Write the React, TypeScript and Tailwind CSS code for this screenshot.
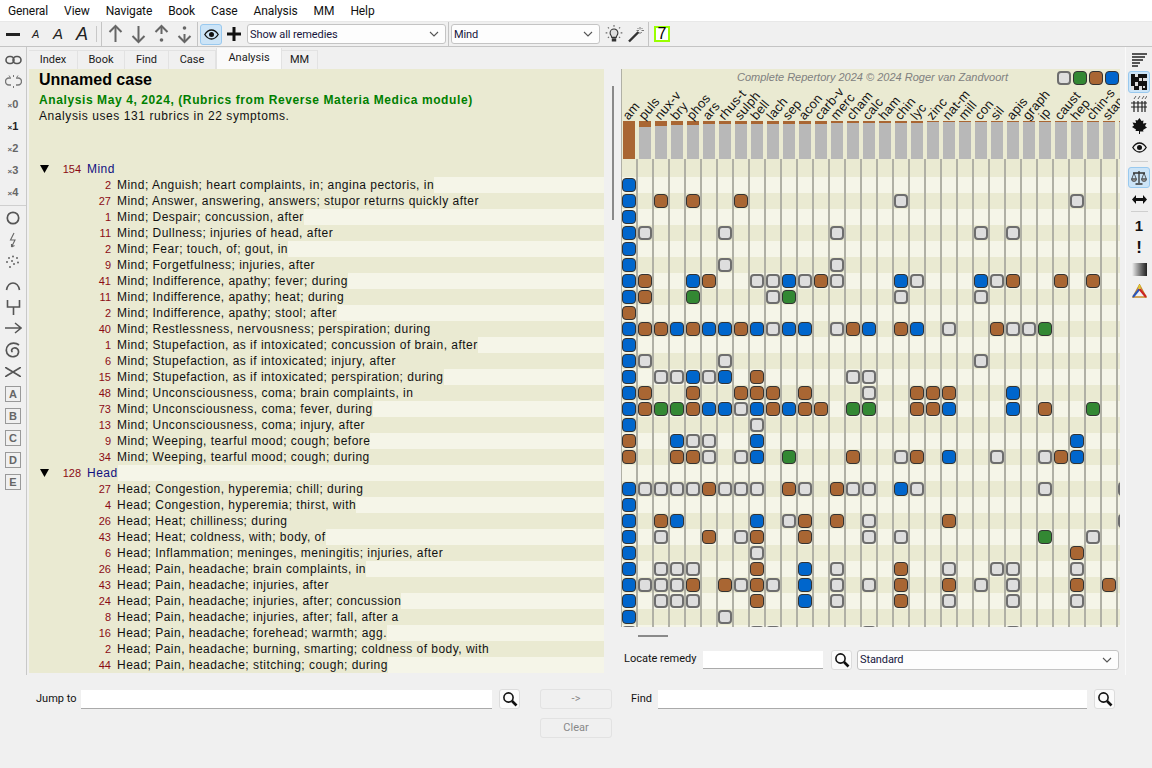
import React from "react";

const ui = "font-['Roboto',sans-serif]";
const list = "font-['Liberation_Sans',Arial,sans-serif]";

const cols = ["am","puls","nux-v","bry","phos","ars","rhus-t","sulph","bell","lach","sep","acon","carb-v","merc","cham","calc","ham","chin","lyc","zinc","nat-m","mill","con","sil","apis","graph","ip","caust","hep","chin-s","stann","x"];
const tops = [38,6,5,4,4,3,3,3,3,3,3,3,3,2,2,2,2,2,2,1,1,1,1,1,1,1,1,1,1,1,1,1];

type Cells = Record<number, string>;
const parse = (s: string): Cells => {
  const o: Cells = {};
  s.split(" ").filter(Boolean).forEach((t) => {
    o[parseInt(t)] = t.slice(-1);
  });
  return o;
};

type Row = { n: number; t: string; head?: boolean; c: string };
const rows: Row[] = [
  { n: 154, t: "Mind", head: true, c: "" },
  { n: 2, t: "Mind; Anguish; heart complaints, in; angina pectoris, in", c: "0b" },
  { n: 27, t: "Mind; Answer, answering, answers; stupor returns quickly after", c: "0b 2r 4r 7r 17w 28w" },
  { n: 1, t: "Mind; Despair; concussion, after", c: "0b" },
  { n: 11, t: "Mind; Dullness; injuries of head, after", c: "0b 1w 6w 13w 22w 24w" },
  { n: 2, t: "Mind; Fear; touch, of; gout, in", c: "0b" },
  { n: 9, t: "Mind; Forgetfulness; injuries, after", c: "0b 6w 13w" },
  { n: 41, t: "Mind; Indifference, apathy; fever; during", c: "0b 1r 4b 5r 8w 9w 10b 11w 12r 13w 17b 18w 22b 23w 24r 27r 29r" },
  { n: 11, t: "Mind; Indifference, apathy; heat; during", c: "0b 1r 4g 9w 10g 17w 22w" },
  { n: 2, t: "Mind; Indifference, apathy; stool; after", c: "0r" },
  { n: 40, t: "Mind; Restlessness, nervousness; perspiration; during", c: "0b 1r 2r 3b 4r 5b 6b 7r 8b 9w 10b 11b 13w 14r 15b 17r 18b 20w 23r 24w 25w 26g" },
  { n: 1, t: "Mind; Stupefaction, as if intoxicated; concussion of brain, after", c: "0b" },
  { n: 6, t: "Mind; Stupefaction, as if intoxicated; injury, after", c: "0b 1w 6w 22w" },
  { n: 15, t: "Mind; Stupefaction, as if intoxicated; perspiration; during", c: "0b 2w 3w 4b 5w 6b 8r 14w 15w" },
  { n: 48, t: "Mind; Unconsciousness, coma; brain complaints, in", c: "0b 1r 4r 7r 8r 9r 11r 15w 18r 19r 20r 24b" },
  { n: 73, t: "Mind; Unconsciousness, coma; fever, during", c: "0b 1r 2g 3g 4r 5b 6b 7w 8b 9r 10b 11r 12r 14g 15g 18r 19r 20b 24b 26r 29g" },
  { n: 13, t: "Mind; Unconsciousness, coma; injury, after", c: "0b 8w" },
  { n: 9, t: "Mind; Weeping, tearful mood; cough; before", c: "0r 3b 4w 5w 8b 28b" },
  { n: 34, t: "Mind; Weeping, tearful mood; cough; during", c: "0r 3r 4r 5w 7w 8b 10g 14r 17w 18r 20b 23w 26w 27r 28b" },
  { n: 128, t: "Head", head: true, c: "" },
  { n: 27, t: "Head; Congestion, hyperemia; chill; during", c: "0b 1w 2w 3w 4w 5r 6w 7w 8w 10r 11w 13r 14w 15w 17b 18w 26w 31w" },
  { n: 4, t: "Head; Congestion, hyperemia; thirst, with", c: "0b" },
  { n: 26, t: "Head; Heat; chilliness; during", c: "0b 2r 3b 8b 10w 11r 13r 15w 20r 31w" },
  { n: 43, t: "Head; Heat; coldness, with; body, of", c: "0b 2w 5r 7w 8r 11r 15w 17w 26g 29w" },
  { n: 6, t: "Head; Inflammation; meninges, meningitis; injuries, after", c: "0b 8w 28r" },
  { n: 26, t: "Head; Pain, headache; brain complaints, in", c: "0b 2w 3w 4w 8r 11b 13w 17r 20w 23w 24w 28w" },
  { n: 43, t: "Head; Pain, headache; injuries, after", c: "0b 1w 2w 3w 4r 6r 7w 8r 9w 11b 13w 15w 17r 20r 22w 24w 28r 30r" },
  { n: 24, t: "Head; Pain, headache; injuries, after; concussion", c: "0b 2w 3w 4w 8r 11b 13w 17r 20w 24w 28w" },
  { n: 8, t: "Head; Pain, headache; injuries, after; fall, after a", c: "0b 6w" },
  { n: 16, t: "Head; Pain, headache; forehead; warmth; agg.", c: "0w 8w 9w 15w 24w" },
  { n: 2, t: "Head; Pain, headache; burning, smarting; coldness of body, with", c: "" },
  { n: 44, t: "Head; Pain, headache; stitching; cough; during", c: "" },
];

function Chip({ k }: { k: string }) {
  if (k === "w")
    return <div className="w-[14px] h-[14px] rounded-[4px] bg-[#dedede] border-2 border-[#6e6e6e]" />;
  const bg = k === "b" ? "bg-[#0066cc]" : k === "r" ? "bg-[#a96633]" : "bg-[#338833]";
  return <div className={`w-[14px] h-[14px] rounded-[4px] border-[1.5px] border-[#333] ${bg}`} />;
}

function Select({ label, w }: { label: string; w: string }) {
  return (
    <div className={`${w} h-[20px] shrink-0 flex items-center justify-between bg-[#fdfdfd] border border-[#c4c4c4] rounded-[3px] pl-[2px] pr-[6px] text-[11px] tracking-[-0.1px] text-[#16163c] ${ui}`}>
      <span className="pt-[2px]">{label}</span>
      <svg width="10" height="6" viewBox="0 0 10 6" fill="none" stroke="#555" strokeWidth="1.1"><path d="M1 1l4 4 4-4" /></svg>
    </div>
  );
}

function Search() {
  return (
    <div className="w-[21px] h-[20px] shrink-0 flex items-center justify-center bg-[#fbfbfb] border border-[#dcdcdc] rounded-[3px]">
      <svg width="16" height="16" viewBox="0 0 16 16" fill="none" stroke="#111"><circle cx="6.5" cy="6.5" r="4.6" strokeWidth="1.6" /><path d="M10 10l4.5 4.5" strokeWidth="2.6" /></svg>
    </div>
  );
}

function Arrow({ down, dot }: { down?: boolean; dot?: boolean }) {
  return (
    <svg width="23" height="20" viewBox="0 0 23 20" fill="none" stroke="#666" strokeWidth="2" className={down ? "rotate-180" : ""}>
      <path d={dot ? "M11.5 10V2" : "M11.5 18V2"} />
      <path d="M5.5 8l6-6 6 6" />
      {dot && <circle cx="11.5" cy="16" r="1.8" fill="#666" stroke="none" />}
    </svg>
  );
}

function Toolbar() {
  return (
    <div className="h-[26px] shrink-0 flex items-center border-t border-[#e8e8e8] border-b border-b-[#c4c4c4] bg-[#f0f0f0] pl-[6px]">
      <div className="w-[14px] h-[3px] bg-[#222] shrink-0" />
      <span className={`ml-[12px] w-[12px] text-[11px] italic text-[#222] ${list}`}>A</span>
      <span className={`ml-[9px] w-[17px] text-[15px] italic text-[#222] ${list}`}>A</span>
      <span className={`ml-[6px] w-[20px] text-[18px] italic text-[#222] ${list}`}>A</span>
      <div className="w-px h-[16px] bg-[#c8c8c8] shrink-0" />
      <div className="ml-[4px] w-px h-[24px] bg-[#c4c4c4] shrink-0" />
      <div className="ml-[2px] flex">
        <Arrow /><Arrow down /><Arrow dot /><Arrow down dot />
      </div>
      <div className="ml-[1px] w-px h-[24px] bg-[#c4c4c4] shrink-0" />
      <div className="ml-[2px] w-[22px] h-[21px] flex items-center justify-center bg-[#cce4f7] border border-[#99c9ef] rounded-[3px]">
        <EyeIcon />
      </div>
      <svg width="14" height="14" viewBox="0 0 14 14" className="ml-[5px]"><path d="M7 0v14M0 7h14" stroke="#111" strokeWidth="3" /></svg>
      <div className="ml-[6px]"><Select label="Show all remedies" w="w-[199px]" /></div>
      <div className="ml-[2px] w-px h-[24px] bg-[#c4c4c4] shrink-0" />
      <div className="ml-[2px]"><Select label="Mind" w="w-[149px]" /></div>
      <svg width="20" height="20" viewBox="0 0 18 18" fill="none" stroke="#333" className="ml-[4px]">
        <path d="M5.5 8a3.5 3.5 0 117 0c0 2-1.5 2.5-1.5 4H7c0-1.500-1.500-2-1.500-4z" fill="#ddd" />
        <path d="M7 13.500h4M7 15h4" strokeWidth="1.500" />
        <path d="M9 1v1.500M3.500 3l1 1M14.500 3l-1 1M1.500 8H3M15 8h1.500M3.500 12.500l1-1M14.500 12.500l-1-1" stroke="#666" />
      </svg>
      <svg width="18" height="18" viewBox="0 0 18 18" fill="none" className="ml-[3px]">
        <path d="M2 16.500L11.500 7" stroke="#333" strokeWidth="2.400" />
        <path d="M13 2v2.500M13 7v2M9.500 5.500H12M14.500 5.500H17M10.500 3l1 1M15.500 3l-1 1M15 8l-.8-.8" stroke="#777" />
      </svg>
      <div className="ml-[3px] w-px h-[24px] bg-[#c4c4c4] shrink-0" />
      <div className={`ml-[5px] w-[16px] h-[16px] border-[2px] border-[#99ff00] flex items-center justify-center text-[16px] leading-none text-black bg-white ${list}`}>7</div>
    </div>
  );
}

function EyeIcon() {
  return (
    <svg width="15" height="11" viewBox="0 0 15 11" fill="none" stroke="#111">
      <path d="M.8 5.500C3 2 5 1 7.500 1s4.500 1 6.700 4.500C12 9 10 10 7.500 10S3 9 .8 5.500z" strokeWidth="1.300" />
      <circle cx="7.500" cy="5.500" r="2.500" fill="#111" stroke="none" />
    </svg>
  );
}

const S = "#555";
const leftIcons: { h: number; el: React.ReactNode }[] = [
  { h: 22, el: <svg width="17" height="10" viewBox="0 0 17 10" fill="none" stroke={S} strokeWidth="1.600"><rect x="1" y="1.500" width="8" height="7" rx="3.500" /><rect x="8" y="1.500" width="8" height="7" rx="3.500" /></svg> },
  { h: 22, el: <svg width="17" height="14" viewBox="0 0 17 14" fill="none" stroke="#777" strokeWidth="1.400"><path d="M6 3H4a3.500 3.500 0 000 7h2M11 3h2a3.500 3.500 0 010 7h-2" /><path d="M8.500 0v2M8.500 11v2M4 .5l1 1.500M13 .5l-1 1.500" strokeWidth="1" /></svg> },
  ...["0", "1", "2", "3", "4"].map((d) => ({
    h: 22,
    el: <span className={`text-[11px] font-bold ${d === "1" ? "text-[#222]" : "text-[#666]"} ${list}`}><span className="text-[8px]">×</span>{d}</span>,
  })),
  { h: 4, el: <div className="w-full h-px bg-[#cfcfcf]" /> },
  { h: 22, el: <svg width="14" height="14" viewBox="0 0 14 14" fill="none" stroke={S} strokeWidth="1.700"><circle cx="7" cy="7" r="5.700" /></svg> },
  { h: 22, el: <svg width="10" height="17" viewBox="0 0 10 17" fill="none" stroke="#666" strokeWidth="1.100"><path d="M6 1L2.500 8H7L3.500 15M3.500 15l0-3M3.500 15l3-1.500" /></svg> },
  { h: 22, el: <svg width="14" height="14" viewBox="0 0 14 14" fill="#666"><circle cx="7" cy="1.500" r="1" /><circle cx="3" cy="3" r="1" /><circle cx="11" cy="3" r="1" /><circle cx="1" cy="7" r="1" /><circle cx="6" cy="6" r="1" /><circle cx="12" cy="7.500" r="1" /><circle cx="8" cy="9" r="1" /><circle cx="4" cy="12" r="1" /></svg> },
  { h: 26, el: <svg width="16" height="9" viewBox="0 0 16 9" fill="none" stroke={S} strokeWidth="1.600"><path d="M1.500 8C2.500 3 5 1 8 1s5.500 2 6.500 7" /></svg> },
  { h: 18, el: <svg width="15" height="16" viewBox="0 0 15 16" fill="none" stroke={S} strokeWidth="1.600" className="-mt-[3px]"><path d="M1.500 1v7h12V1M7.500 8v8" /></svg> },
  { h: 22, el: <svg width="17" height="12" viewBox="0 0 17 12" fill="none" stroke={S} strokeWidth="1.500"><path d="M0 6h16M10 1l6 5-6 5" /></svg> },
  { h: 22, el: <svg width="16" height="16" viewBox="0 0 16 16" fill="none" stroke={S} strokeWidth="1.700"><path d="M14 3C11 .5 6 .5 3.500 3 .5 6 .5 11 4 13.500c3.500 2.500 9 1 9.500-3 .4-3-2-5-4.500-4.500C6.500 6.500 6 9 7.500 10" /></svg> },
  { h: 22, el: <svg width="16" height="10" viewBox="0 0 16 10" fill="none" stroke={S} strokeWidth="1.600"><path d="M0 0c4 3 12 7 16 10M0 10C4 7 12 3 16 0" /></svg> },
  ...["A", "B", "C", "D", "E"].map((l) => ({
    h: 22,
    el: <div className={`w-[16px] h-[16px] border border-[#999] flex items-center justify-center text-[11px] font-bold text-[#666] leading-none ${list}`}>{l}</div>,
  })),
];

function LeftBar() {
  return (
    <div className="w-[27px] shrink-0 flex flex-col items-center border-r border-[#c8c8c8] pt-[2px]">
      {leftIcons.map((it, i) => (
        <div key={i} style={{ height: it.h }} className="w-full flex items-center justify-center">{it.el}</div>
      ))}
    </div>
  );
}

function RightBar() {
  return (
    <div className="w-[27px] shrink-0 flex flex-col items-center border-l border-[#fafafa] pt-[2px]">
      <div className="h-[22px] flex items-center">
        <svg width="15" height="15" viewBox="0 0 15 15" stroke="#222" strokeWidth="1.300"><path d="M0 1h15M0 4h13M0 7h11M0 10h8M0 13h6" /></svg>
      </div>
      <div className="w-[22px] h-[22px] flex items-center justify-center bg-[#cce4f7] border border-[#99c9ef] rounded-[3px]">
        <svg width="16" height="16" viewBox="0 0 16 16"><rect width="16" height="16" fill="#111" /><path d="M4 0h3v3H4zM12 4h4v3h-4zM4 8h3v4H4zM8 4h3v3H8zM0 12h3v4H0zM8 12h3v4H8zM12 12h2v2h-2z" fill="#ddd" /></svg>
      </div>
      <div className="h-[22px] flex items-center">
        <svg width="16" height="16" viewBox="0 0 16 16" stroke="#222" fill="none"><path d="M0 7h16M0 11h16M3 5v11M7 5v11M11 5v11M14 5v11" strokeWidth="1.200" /><path d="M3 3l2-3M7 3l2-3M11 3l2-3M14 3l2-3" strokeWidth=".7" /></svg>
      </div>
      <div className="h-[22px] flex items-center">
        <svg width="15" height="16" viewBox="0 0 15 16"><path d="M7.500 0l2 3 2-.5-.5 3 3.500-.5-1.500 3 2 1.500-4 2.500.5 1.500H8v2.500H7V13H3.500l.5-1.500L0 9l2-1.500L.5 4.500 4 5l-.5-3 2 .5z" fill="#111" /></svg>
      </div>
      <div className="h-[21px] flex items-center"><EyeIcon /></div>
      <div className="w-[17px] h-px bg-[#cfcfcf] my-[3px]" />
      <div className="mt-[2px] w-[22px] h-[21px] flex items-center justify-center bg-[#cce4f7] border border-[#99c9ef] rounded-[3px]">
        <svg width="16" height="15" viewBox="0 0 16 15" fill="none" stroke="#333"><path d="M8 1v12M4.500 14h7M2 3h12" strokeWidth="1.300" /><path d="M3 3L.7 9h4.600zM13 3l-2.300 6h4.600z" strokeWidth=".8" /><path d="M.5 9a2.500 2.500 0 005 0zM10.500 9a2.500 2.500 0 005 0z" fill="#999" strokeWidth=".7" /></svg>
      </div>
      <div className="h-[22px] flex items-center">
        <svg width="15" height="9" viewBox="0 0 15 9" fill="#111"><path d="M0 4.500L4 0v3h7V0l4 4.500L11 9V6H4v3z" /></svg>
      </div>
      <div className="w-[17px] h-px bg-[#cfcfcf] my-[1px]" />
      <div className={`h-[22px] mt-[1px] flex items-center text-[15px] font-bold text-[#111] leading-none ${list}`}>1</div>
      <div className={`h-[22px] flex items-center text-[17px] font-bold text-[#111] leading-none ${list}`}>!</div>
      <div className="h-[22px] flex items-center">
        <div className="w-[15px] h-[13px] bg-gradient-to-r from-[#f0f0f0] to-[#222]" />
      </div>
      <div className="h-[22px] flex items-center">
        <svg width="15" height="14" viewBox="0 0 15 14" fill="none"><path d="M7.500 1L1 13h13z" stroke="#c98a2a" strokeWidth="1.500" /><path d="M1 13L7.500 5" stroke="#2a55bb" strokeWidth="2" /><path d="M14 13L7.500 5" stroke="#c22" strokeWidth="2" /><path d="M7.500 1v4" stroke="#ddcc33" strokeWidth="2" /></svg>
      </div>
    </div>
  );
}

function Tabs() {
  const t: [string, string][] = [["Index", "w-[49px]"], ["Book", "w-[47px]"], ["Find", "w-[44px]"], ["Case", "w-[47px]"], ["Analysis", "w-[66px]"], ["MM", "w-[36px]"]];
  return (
    <div className={`h-[22px] shrink-0 flex items-end pl-[2px] text-[11px] text-[#1a1a1a] ${ui}`}>
      {t.map(([l, w]) =>
        l === "Analysis" ? (
          <div key={l} className={`${w} h-[21px] bg-[#fafafa] border-x border-[#e2e2e2] text-center leading-[20px]`}>{l}</div>
        ) : (
          <div key={l} className={`${w} h-[19px] bg-[#f0f0f0] border-r border-t border-[#e2e2e2] text-center leading-[18px]`}>{l}</div>
        )
      )}
    </div>
  );
}

function LeftPanel() {
  return (
    <div className={`w-[575px] shrink-0 bg-[#eaead2] overflow-hidden text-[12px] tracking-[0.48px] ${list}`}>
      <div className="h-[92px] pl-[10px]">
        <div className="h-[23px] text-[16px] leading-[21px] font-bold tracking-normal text-black">Unnamed case</div>
        <div className="h-[16px] leading-[17px] font-bold tracking-[0.6px] text-[#008000]">Analysis May 4, 2024, (Rubrics from Reverse Materia Medica module)</div>
        <div className="h-[16px] leading-[16px] tracking-[0.58px] text-[#111]">Analysis uses 131 rubrics in 22 symptoms.</div>
      </div>
      {rows.map((r, i) =>
        <div key={i} className="h-[16px] flex leading-[16px]">
          {r.head ? (
            <div className="flex shrink-0">
              <div className="w-[10px] ml-[11px] flex items-center">
                <svg width="9" height="8" viewBox="0 0 9 8"><path d="M0 0h9L4.500 8z" fill="#000" /></svg>
              </div>
              <span className="w-[31px] text-right text-[11px] tracking-normal text-[#8b0a14]">{r.n}</span>
              <span className="ml-[6px] text-[#101080]">{r.t}</span>
            </div>
          ) : (
            <div className="flex shrink-0">
              <span className="w-[82px] text-right text-[11px] tracking-normal text-[#8b0a14]">{r.n}</span>
              <span className="ml-[6px] text-[#111]">{r.t}</span>
            </div>
          )}
          <div className={`flex-1 ${i % 2 === 1 ? "bg-[#f5f5e8]" : ""}`} />
        </div>
      )}
    </div>
  );
}

function RightPanel() {
  const gridRows = rows.slice(1, 30);
  return (
    <div className="w-[499px] shrink-0 flex flex-col">
      <div className="h-[558px] shrink-0 overflow-hidden bg-[#eaead2] border-l border-[#b0b0a5]">
        <div className="h-[90px] flex flex-col overflow-hidden bg-[#eaead2]">
          <div className="h-[15px] mt-[1px] flex items-center">
            <span className={`ml-[115px] text-[11px] italic text-[#808080] ${list}`}>Complete Repertory 2024 © 2024 Roger van Zandvoort</span>
            <div className="ml-auto mr-[1px] flex gap-[2px] items-center">
              {["w", "g", "r", "b"].map((k) => (
                <div key={k} className="w-[14px] flex justify-center"><Chip k={k} /></div>
              ))}
            </div>
          </div>
          <div className="flex-1" />
          <div className="h-[38px] flex shrink-0">
            {cols.map((c, i) => (
              <div key={i} className="relative w-[16px] shrink-0 pl-px">
                {c !== "x" && (
                  <span className={`absolute left-[8px] bottom-[37px] origin-bottom-left -rotate-[50deg] whitespace-nowrap text-[13px] leading-[13px] tracking-[0.2px] text-[#111] ${list}`}>{c}</span>
                )}
                <div className="w-[12px] h-[38px] bg-[#b8b8b8]">
                  <div className="bg-[#a96633]" style={{ height: tops[i] }} />
                </div>
              </div>
            ))}
          </div>
        </div>
        <div className="h-[18px] flex">
          {cols.map((_, i) => <div key={i} className="w-[16px] shrink-0 border-r-2 border-[#b0b0a5]" />)}
        </div>
        {gridRows.map((r, i) => {
          const cells = parse(r.c);
          return (
            <div key={i} className={`h-[16px] flex ${i % 2 === 0 ? "bg-[#f5f5e8]" : "bg-[#eaead2]"}`}>
              {cols.map((_, k) => (
                <div key={k} className="w-[16px] h-[16px] shrink-0 border-r-2 border-[#b0b0a5] flex items-center justify-center">
                  {cells[k] && <Chip k={cells[k]} />}
                </div>
              ))}
            </div>
          );
        })}
      </div>
      <div className="h-[16px] shrink-0 pt-[8px] pl-[17px]">
        <div className="w-[30px] h-[2px] bg-[#8a8a8a]" />
      </div>
      <div className={`flex items-center h-[30px] pt-[3px] text-[11px] text-[#111] ${ui}`}>
        <span className="ml-[3px] w-[79px]">Locate remedy</span>
        <div className="w-[120px] h-[18px] bg-white border-b border-[#aaa]" />
        <div className="ml-[8px]"><Search /></div>
        <div className="ml-[5px]"><Select label="Standard" w="w-[262px]" /></div>
      </div>
    </div>
  );
}

export default function App() {
  return (
    <div className="w-[1152px] h-[768px] flex flex-col bg-[#f0f0f0] overflow-hidden">
      <div className={`h-[21px] shrink-0 bg-white flex items-center text-[12px] tracking-[-0.1px] text-[#111] ${ui}`}>
        {["General", "View", "Navigate", "Book", "Case", "Analysis", "MM", "Help"].map((m) => (
          <span key={m} className="px-[8px]">{m}</span>
        ))}
      </div>
      <Toolbar />
      <div className="h-[628px] shrink-0 flex">
        <LeftBar />
        <div className="w-[1098px] shrink-0 flex flex-col">
          <Tabs />
          <div className="flex h-[604px] pl-[2px]">
            <LeftPanel />
            <div className="w-[17px] shrink-0 pl-[8px] pt-[17px]">
              <div className="w-[2px] h-[134px] bg-[#8a8a8a]" />
            </div>
            <RightPanel />
          </div>
        </div>
        <RightBar />
      </div>
      <div className={`flex-1 text-[11px] text-[#111] pl-[36px] pt-[14px] ${ui}`}>
        <div className="flex items-center h-[20px]">
          <span className="w-[45px]">Jump to</span>
          <div className="w-[411px] h-[19px] bg-white border-b border-[#aaa]" />
          <div className="ml-[7px]"><Search /></div>
          <div className="ml-[20px] w-[72px] h-[20px] bg-[#f0f0f0] border border-[#e2e2e2] rounded-[3px] flex items-center justify-center text-[#888]">-&gt;</div>
          <span className="ml-[19px] w-[27px]">Find</span>
          <div className="w-[429px] h-[19px] bg-white border-b border-[#aaa]" />
          <div className="ml-[7px]"><Search /></div>
        </div>
        <div className="mt-[9px] ml-[504px] w-[72px] h-[20px] bg-[#f0f0f0] border border-[#e2e2e2] rounded-[3px] flex items-center justify-center text-[#888]">Clear</div>
      </div>
    </div>
  );
}
